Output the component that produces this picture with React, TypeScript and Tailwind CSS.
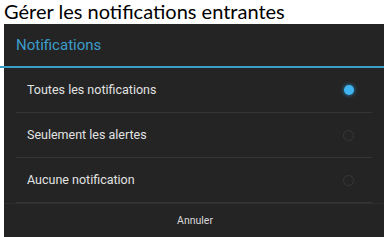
export default function App() {
  const options = [
    { label: "Toutes les notifications", checked: true },
    { label: "Seulement les alertes", checked: false },
    { label: "Aucune notification", checked: false },
  ];

  return (
    <div className="w-[384px] h-[237px] bg-white overflow-hidden flex flex-col">
      <h1 className="h-[24px] pl-[4px] text-[20px] leading-[22px] text-black" style={{ fontFamily: "Lato, sans-serif" }}>
        Gérer les notifications entrantes
      </h1>
      <div className="flex-1 ml-[4px] bg-[#242424] flex flex-col" style={{ fontFamily: "Roboto, sans-serif" }}>
        <div className="h-[42px] flex items-center pl-[12px] text-[15px] text-[#3d9dcb]">Notifications</div>
        <div className="h-[2px] bg-[#3a9dcc] -ml-[4px]" />
        <div className="flex flex-col">
          {options.map((o) => (
            <div key={o.label} className="mx-[12px] border-b border-[#353535] h-[45px] flex items-center justify-between pl-[11px] pr-[18px]">
              <span className="text-[12.5px] text-[#e2e2e2]">{o.label}</span>
              {o.checked ? (
                <span className="w-[10px] h-[10px] rounded-full bg-[#3fb4f0] shadow-[0_0_4px_#2a8fc7]" />
              ) : (
                <span className="w-[11px] h-[11px] rounded-full border-[1.5px] border-[#383838]" />
              )}
            </div>
          ))}
        </div>
        <div className="flex-1 flex items-center justify-center pl-[2px] text-[10.5px] text-[#d8d8d8] border-t border-[#2e2e2e]">Annuler</div>
      </div>
    </div>
  );
}
